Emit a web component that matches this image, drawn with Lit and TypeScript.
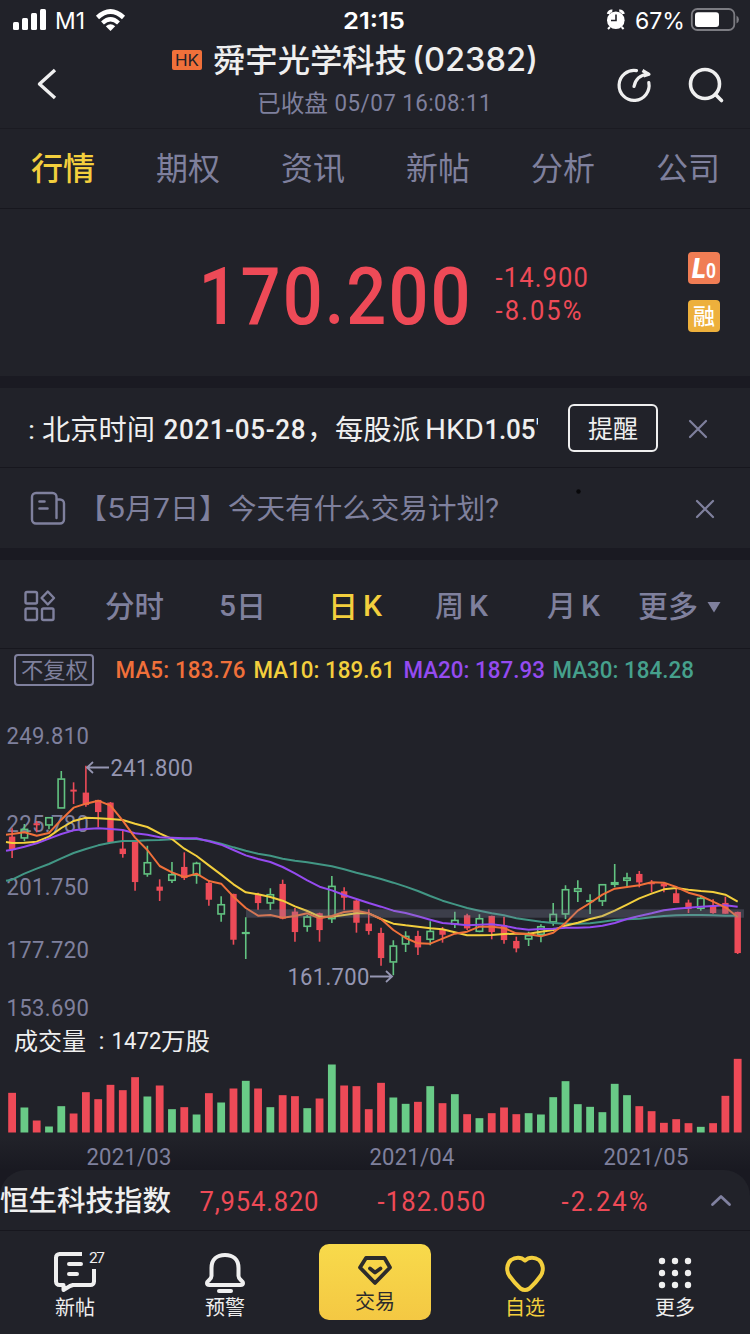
import { LitElement, html, svg, css } from "lit";
import { customElement } from "lit/decorators.js";

/** One line of text set to an exact advance width, with its baseline inside a box of height h. */
const line = (text: string, w: number, size: number, base: number, h: number, cls = "") => html`
  <svg class="line ${cls}" width=${w} height=${h}>
    <text x="0" y=${base} font-size=${size} textLength=${w} lengthAdjust="spacingAndGlyphs">${text}</text>
  </svg>`;

/** Figures: narrow glyphs, openly spaced over the width w. */
const figures = (text: string, w: number, size: number, base: number, h: number, cls = "", squeeze = 0.93) => html`
  <svg class="line ${cls}" width=${w} height=${h}>
    <text transform="translate(0.5 0) scale(${squeeze} 1)" x="0" y=${base} font-size=${size} textLength=${w / squeeze} lengthAdjust="spacing">${text}</text>
  </svg>`;

// [rising, high, bodyTop, bodyBottom, low, volume] in thirds of a pixel
const CANDLES: [number, number, number, number, number, number][] = [
  [0,385,411,447,474,119],[1,372,387,415,424,75],[0,363,371,374,397,36],[1,351,352,376,388,18],[1,213,236,325,325,79],
  [0,247,270,273,312,57],[0,197,279,314,320,121],[0,300,301,335,382,100],[0,306,309,426,426,143],[0,393,447,461,473,127],
  [0,424,425,545,572,166],[1,437,487,523,530,108],[0,538,561,571,603,141],[1,486,523,542,549,70],[0,457,502,533,540,76],
  [1,485,489,527,551,54],[0,542,550,598,617,118],[1,589,613,643,665,90],[0,581,583,718,734,132],[1,652,697,700,777,155],
  [0,578,584,608,629,132],[1,565,583,610,630,76],[0,539,553,655,658,112],[0,624,636,695,725,109],[1,645,650,680,695,73],
  [0,638,641,689,725,102],[1,528,558,657,669,204],[0,562,575,592,631,141],[0,600,603,667,698,139],[0,628,672,692,704,70],
  [0,683,700,773,797,149],[1,721,737,787,826,105],[1,694,708,733,756,86],[0,692,709,741,765,92],[1,664,693,719,736,139],
  [0,681,689,703,728,88],[1,635,660,673,684,115],[0,641,647,684,690,55],[1,643,655,695,697,43],[0,647,649,695,718,58],
  [0,650,677,719,731,75],[0,710,724,744,757,55],[1,695,706,718,738,58],[1,673,679,704,727,54],[1,609,642,667,677,106],
  [1,556,568,643,657,154],[1,541,565,575,606,85],[1,583,601,605,642,77],[1,553,553,604,618,61],[1,492,547,554,562,146],
  [1,518,533,542,563,112],[0,513,523,546,562,79],[0,540,548,549,577,64],[0,546,552,558,577,29],[0,567,581,608,608,40],
  [0,599,609,626,639,28],[1,590,594,626,632,17],[0,598,618,638,641,28],[0,590,610,640,641,110],[0,635,637,758,762,221],
];

const AVERAGES: [string, number[]][] = [
  ["teal", [542,539,521,506,492,475,459,447,436,428,423,423,421,420,418,417,417,422,431,442,452,461,467,476,482,487,493,499,508,518,527,537,548,560,573,588,602,613,624,632,640,646,655,660,665,669,671,671,670,665,660,658,656,652,648,646,645,645,646,647,647]],
  ["gold", [426,429,428,425,410,384,363,353,355,357,360,371,381,400,417,446,468,496,524,553,577,583,591,602,619,633,650,650,645,640,640,657,671,676,680,685,688,697,706,706,705,702,701,701,695,690,677,668,657,648,632,614,595,581,568,564,569,573,576,584,605]],
  ["purple", [452,449,440,430,416,402,391,387,385,387,390,400,404,412,413,415,415,424,434,450,466,477,486,501,520,541,560,571,585,597,609,620,632,639,649,659,669,672,676,674,673,677,685,689,687,686,683,683,682,677,669,657,648,640,631,626,623,620,618,616,620]],
  ["orange", [404,402,397,407,399,359,323,311,302,317,362,413,450,498,517,531,521,543,551,590,624,647,645,653,648,640,655,648,636,632,640,657,690,714,730,731,716,701,695,680,680,684,700,703,709,698,669,632,609,584,566,561,556,547,548,561,578,588,605,622,651]],
];

const cx = (i: number) => 12.1 + i * 12.298;
const cy = (v: number) => 700 + v / 3;
const SQUEEZE = 0.92;

@customElement("k-chart")
class KChart extends LitElement {
  static styles = css`
    :host { display: block; height: 480px; }
    svg { display: block; font-family: Roboto, "Noto Sans CJK SC", sans-serif; font-size: 24px; }
    text { fill: #7f809d; }
    .note { fill: #9596b2; }
    .title { fill: #efefef; }
    .up { stroke: #62c381; fill: none; stroke-width: 1.6; }
    .down { stroke: #ed4b58; fill: #ed4b58; stroke-width: 1.6; }
    .vup { fill: #69cb87; }
    .vdown { fill: #ee4a57; }
    .ma { fill: none; stroke-width: 2; stroke-linejoin: round; }
    .orange { stroke: #f0703a; }
    .gold { stroke: #f3cf3d; }
    .purple { stroke: #954bf0; }
    .teal { stroke: #429785; }
    .arrow { fill: none; stroke: #9596b2; stroke-width: 1.8; }
    .band { fill: #8587a0; opacity: 0.28; }
  `;

  label(text: string, x: number, y: number, w: number, cls = "") {
    return svg`<text class=${cls} x=${x} y=${y} textLength=${w} lengthAdjust="spacingAndGlyphs">${text}</text>`;
  }

  figure(text: string, x: number, y: number, w: number, cls = "") {
    return svg`<text class=${cls} transform="translate(${x + 0.4} ${y}) scale(${SQUEEZE} 1)" textLength=${w / SQUEEZE} lengthAdjust="spacing">${text}</text>`;
  }

  render() {
    return html`
      <svg width="750" height="480" viewBox="0 690 750 480">
        <defs>
          <linearGradient id="fade" x1="0" y1="0" x2="0" y2="1">
            <stop offset="0" stop-color="#191921" stop-opacity="0"></stop>
            <stop offset="1" stop-color="#191921"></stop>
          </linearGradient>
        </defs>
        <rect x="0" y="1138" width="750" height="32" fill="url(#fade)"></rect>
        ${this.figure("249.810", 6, 744, 82.500)}
        ${this.figure("225.780", 6, 832, 82.500)}
        ${this.figure("201.750", 6, 895, 82.500)}
        ${this.figure("177.720", 6, 958, 82.500)}
        ${this.figure("153.690", 6, 1016, 82.500)}
        ${CANDLES.map(([up, high, top, bottom, low], i) => up
          ? svg`<g class="up">
              <path d="M${cx(i)} ${cy(high)}V${cy(top)}M${cx(i)} ${cy(bottom)}V${cy(low)}"></path>
              <rect x=${cx(i) - 3.2} y=${cy(top) + 0.4} width="6.4" height=${Math.max(0.6, (bottom - top) / 3 - 0.8)}></rect>
            </g>`
          : svg`<g class="down">
              <path d="M${cx(i)} ${cy(high)}V${cy(low)}"></path>
              <rect x=${cx(i) - 2.4} y=${cy(top) + 0.4} width="4.8" height=${Math.max(0.4, (bottom - top) / 3 - 0.8)}></rect>
            </g>`)}
        ${AVERAGES.map(([cls, ys]) => svg`
          <polyline class="ma ${cls}" points=${ys.map((v, i) => `${i ? cx(i - 1) : 6},${cy(v)}`).join(" ")}></polyline>`)}
        <rect class="band" x="246" y="909.3" width="498" height="8.4"></rect>
        <path class="arrow" d="M109 767.5H87M93 762l-6 5.500 6 5.500"></path>
        ${this.figure("241.800", 110, 776, 82.500, "note")}
        <path class="arrow" d="M370 976.500H392M386 971l6 5.500-6 5.500"></path>
        ${this.figure("161.700", 287, 985, 82, "note")}
        ${this.label("成交量", 14, 1050, 72, "title")}
        ${this.label(":", 98.500, 1049, 6, "title")}
        ${this.figure("1472", 111, 1049, 50, "title")}
        ${this.label("万股", 161, 1050, 49, "title")}
        ${CANDLES.map(([up, , , , , vol], i) => svg`
          <rect class=${up ? "vup" : "vdown"} x=${cx(i) - 3.9} y=${1132.500 - vol / 3} width="7.8" height=${vol / 3}></rect>`)}
        ${this.figure("2021/03", 86, 1164.500, 85)}
        ${this.figure("2021/04", 369, 1164.500, 85)}
        ${this.figure("2021/05", 603, 1164.500, 85)}
      </svg>`;
  }
}

@customElement("app-root")
class AppRoot extends LitElement {
  static styles = css`
    :host {
      display: block; width: 750px; height: 1334px; overflow: hidden; background: #212229;
      color: #efefef; font-family: Roboto, "Noto Sans CJK SC", sans-serif;
    }
    * { box-sizing: border-box; }
    svg { display: block; flex: none; overflow: visible; }
    .line text { fill: currentColor; }
    .row { display: flex; }
    .inter { font-family: Inter, sans-serif; }
    .medium { font-weight: 500; }
    .bold { font-weight: 600; }
    .muted { color: #7f809d; }
    .gold { color: #f3cf3d; }
    .red { color: #ee4a57; }
    .orange { color: #f0703a; }
    .purple { color: #954bf0; }
    .teal { color: #46a08c; }

    .status { height: 40px; padding-left: 12px; color: #fff; }
    .status .carrier { margin-left: 7px; }
    .status .wifi { margin-left: 10px; }
    .status .clock { margin-left: 216px; }
    .status .alarm { margin-left: 201px; }
    .status .percent { margin-left: 9px; }
    .status .battery { margin-left: 5px; }

    .header { height: 89px; border-bottom: 1px solid #1b1b22; display: grid; grid-template-columns: 172px 366px 1fr; }
    .back { margin-left: 36px; margin-top: 27px; }
    .title { height: 42px; }
    .hk { width: 30px; height: 20px; margin: 10px 11px 0 0; background: #f0703a; border-radius: 2px; color: #212229; padding-left: 3px; }
    .sub { padding-left: 85px; gap: 6px; }
    .code { margin-left: 5px; }
    .actions { padding: 27px 0 0 78px; gap: 34px; }

    .tabs { height: 80px; border-bottom: 1px solid #17171e; display: grid; grid-template-columns: repeat(6, 1fr); justify-items: center; }
    .quote { height: 167px; padding-left: 198px; }
    .change { margin-left: 25px; width: 193px; }
    .badges { display: grid; gap: 16px; align-content: start; padding-top: 43px; }
    .badge { width: 32px; height: 32px; border-radius: 4px; color: #fff; }
    .lo { background: #f07d54; padding-left: 4px; }
    .margin { background: #edb03c; padding-left: 5px; }
    .lo svg { font-style: italic; font-weight: 900; }
    .lo .zero { font-style: normal; font-weight: 700; }
    .gap { height: 12px; background: #1a1a22; }

    .notice { height: 80px; border-bottom: 1px solid #17171e; padding-left: 28px; }
    .marquee { width: 510px; overflow: hidden; }
    .m1 { margin-left: 7px; } .m2 { margin-left: 8px; } .m3 { margin-left: 2px; } .m4 { margin-left: 5px; }
    .remind { width: 90px; height: 48px; margin: 16px 0 0 30px; border: 2px solid #efefef; border-radius: 6px; padding-left: 18px; }
    .close { margin: 32px 0 0 31px; }
    .plan { height: 80px; padding-left: 30px; }
    .plan .news { margin: 23px 12px 0 0; }
    .plan .dot { margin: 21px 0 0 77px; }
    .plan .close { margin-left: 115px; }

    .periods { height: 89px; border-bottom: 1px solid #17171e; padding-left: 23px; }
    .periods .grid { margin-top: 29px; }
    .p1 { margin-left: 49px; } .p2 { margin-left: 55px; } .p3 { margin-left: 62px; }
    .p4 { margin-left: 53px; } .p5 { margin-left: 59px; } .p6 { margin-left: 38px; }
    .pk { margin-left: 5px; }
    .tri { margin: 42px 0 0 9px; }

    .ma { height: 41px; padding-left: 14px; gap: 8px; }
    .adjust { width: 80px; height: 32px; margin: 5px 13px 0 0; border: 2px solid #7f809d; border-radius: 4px; padding-left: 5px; }

    .under { background: #191921; }
    .index { height: 61px; background: #212229; border-bottom: 1px solid #17171e; border-radius: 26px 26px 0 0; }
    .i1 { margin-left: 28px; } .i2 { margin-left: 59px; } .i3 { margin-left: 76px; }
    .chev { margin: 24px 0 0 64px; }

    .nav { display: grid; grid-template-columns: repeat(5, 1fr); justify-items: center; height: 103px; }
    .item { padding-top: 13px; display: grid; justify-items: center; align-content: start; }
    .trade { background: linear-gradient(#f8da4b, #f4c843); width: 112px; height: 76px; border-radius: 10px; margin-top: 13px; padding-top: 0; color: #2c2b2c; }
  `;

  cross() {
    return html`<svg class="close" width="18" height="18" viewBox="0 0 18 18">
      <path d="M1 1L17 17M17 1L1 17" stroke="#7f809d" stroke-width="2.200" stroke-linecap="round"></path></svg>`;
  }

  statusBar() {
    return html`<div class="row status">
      <svg width="36" height="40" fill="#fff">
        <rect x="1" y="22" width="6" height="8" rx="1.500"></rect><rect x="10" y="18" width="6" height="12" rx="1.500"></rect>
        <rect x="19" y="13" width="6" height="17" rx="1.500"></rect><rect x="28" y="9" width="6" height="21" rx="1.500"></rect>
      </svg>
      <div class="carrier">${line("M1", 30, 23.500, 29, 40, "inter")}</div>
      <svg class="wifi" width="32" height="40" viewBox="95 0 32 40" fill="none" stroke="#fff">
        <path d="M97.500 17.500Q110.500 5.500 123.500 17.500" stroke-width="4.600"></path>
        <path d="M102.500 23Q110.500 15.500 118.500 23" stroke-width="4.200"></path>
        <path d="M110.500 31L105.800 26.300Q110.500 22.300 115.200 26.300Z" fill="#fff" stroke="none"></path>
      </svg>
      <div class="clock">${line("21:15", 62, 23.500, 29, 40, "inter bold")}</div>
      <svg class="alarm" width="20" height="40" viewBox="606 0 20 40">
        <circle cx="615.800" cy="20.300" r="8.800" fill="#fff"></circle>
        <path d="M608.300 14a3.500 3.500 0 0 1 4-3M623.300 14a3.500 3.500 0 0 0-4-3" stroke="#fff" stroke-width="3" fill="none"></path>
        <path d="M610 27l-2 2M621.600 27l2 2" stroke="#fff" stroke-width="2"></path>
        <path d="M616 14.500v6h-5" stroke="#212229" stroke-width="1.600" fill="none"></path>
      </svg>
      <div class="percent">${line("67%", 50, 23.500, 29, 40, "inter")}</div>
      <svg class="battery" width="50" height="40" viewBox="690 0 50 40">
        <rect x="691.800" y="9" width="42.500" height="21" rx="5.500" fill="none" stroke="#7c7c82" stroke-width="1.800"></rect>
        <rect x="695" y="12.300" width="24" height="14.600" rx="3" fill="#fff"></rect>
        <path d="M736.500 15.500a4.500 4.500 0 0 1 0 8z" fill="#7c7c82"></path>
      </svg>
    </div>`;
  }

  header() {
    return html`<div class="header">
      <svg class="back" width="30" height="34" viewBox="36 67 30 34"><path d="M55 70L39.500 84L55 98" fill="none" stroke="#efefef" stroke-width="3.400" stroke-linejoin="round"></path></svg>
      <div>
        <div class="row title">
          <div class="hk">${line("HK", 24, 16.500, 16, 20, "inter")}</div>
          ${line("舜宇光学科技", 194, 32, 32, 42, "medium")}
          <div class="code">${line("(02382)", 126, 32, 31, 42, "inter medium")}</div>
        </div>
        <div class="row sub muted">${line("已收盘", 71, 24, 29.500, 40)}${figures("05/07 16:08:11", 157, 24, 29, 40)}</div>
      </div>
      <div class="row actions">
        <svg width="36" height="36" viewBox="616 67 36 36" fill="none" stroke="#efefef" stroke-width="3.200">
          <path d="M636.500 70.600A15 15 0 1 0 648.800 82.500" stroke-linecap="round"></path>
          <path d="M634 86.500Q636 75.500 648 74" stroke-linecap="round"></path>
          <path d="M642.500 70.500L649 74.300L643.500 76" stroke-linejoin="round"></path>
        </svg>
        <svg width="38" height="36" viewBox="686 67 38 36" fill="none" stroke="#efefef" stroke-width="3.600">
          <circle cx="705" cy="84" r="14.500"></circle><path d="M715.500 94.500L721.500 100.500" stroke-linecap="round"></path>
        </svg>
      </div>
    </div>`;
  }

  render() {
    return html`
      ${this.statusBar()}
      ${this.header()}
      <div class="tabs">
        ${["行情", "期权", "资讯", "新帖", "分析", "公司"].map((t, i) => line(t, 64, 32, 51, 79, i ? "muted" : "gold medium"))}
      </div>

      <div class="row quote red">
        ${figures("170.200", 272, 80, 115, 167, "medium", 0.88)}
        <div class="change">
          ${figures("-14.900", 92.500, 27.500, 78, 84)}
          ${figures("-8.05%", 86, 27.500, 27, 40)}
        </div>
        <div class="badges">
          <div class="row badge lo">${line("L", 14, 28, 26, 32)}${line("0", 10, 21, 26, 32, "zero")}</div>
          <div class="row badge margin">${line("融", 22, 22, 24, 32, "medium")}</div>
        </div>
      </div>
      <div class="gap"></div>

      <div class="row notice">
        <div class="row marquee">
          ${line(":", 7, 26, 51, 79)}
          ${line("北京时间", 113, 28, 51.500, 79, "m1")}
          ${figures("2021-05-28", 142, 28, 51, 79, "medium m2")}
          ${line("，", 28, 28, 51, 79, "m3")}
          ${line("每股派", 85, 28, 51.500, 79)}
          ${line("HKD", 59, 28, 51, 79, "m4")}
          ${figures("1.05", 51, 28, 51, 79, "medium")}
          ${line("'", 6, 28, 51, 79)}
        </div>
        <div class="remind">${line("提醒", 50, 25, 31.500, 44)}</div>
        ${this.cross()}
      </div>

      <div class="row plan muted">
        <svg class="news" width="36" height="36" viewBox="30 491 36 36" fill="none" stroke="#7f809d" stroke-width="2.400">
          <path d="M56.500 518V497a4 4 0 0 0-4-4H36a4 4 0 0 0-4 4V519.500a4 4 0 0 0 4 4H60a4 4 0 0 0 4-4V503.500a4 4 0 0 0-4-4H57" stroke-linecap="round"></path>
          <path d="M39.500 501.500h5M39.500 508.500h8" stroke-width="2.600" stroke-linecap="round"></path>
        </svg>
        ${line("【", 29, 28, 51, 79)}${line("5", 18, 28, 50, 79)}${line("月", 28, 28, 51, 79)}${line("7", 17, 28, 50, 79)}${line("日", 29, 28, 51, 79)}${line("】", 29, 28, 51, 79)}
        ${line("今天有什么交易计划", 257, 28, 51, 79)}${line("?", 14, 28, 50, 79)}
        <svg class="dot" width="5" height="5"><circle cx="2.500" cy="2.500" r="2.200" fill="#08080a"></circle></svg>
        ${this.cross()}
      </div>
      <div class="gap"></div>

      <div class="row periods muted">
        <svg class="grid" width="33" height="34" viewBox="23 589 33 34" fill="none" stroke="#7f809d" stroke-width="2.400" stroke-linejoin="round">
          <rect x="25.500" y="592" width="11.500" height="11.500" rx="1.500"></rect><path d="M47.800 591.500L54 598L47.800 604.500L41.600 598Z"></path>
          <rect x="25.500" y="608.500" width="11.500" height="11.500" rx="1.500"></rect><rect x="42" y="608.500" width="11.500" height="11.500" rx="1.500"></rect>
        </svg>
        ${line("分时", 59, 29.500, 57, 88, "p1 medium")}
        ${line("5", 17, 29, 56, 88, "p2 medium")}${line("日", 30, 30, 57, 88, "medium")}
        ${line("日", 30, 30, 57, 88, "p3 gold medium")}${line("K", 19, 29, 56, 88, "pk gold medium")}
        ${line("周", 29, 29, 57, 88, "p4 medium")}${line("K", 19, 29, 56, 88, "pk medium")}
        ${line("月", 29, 29, 57, 88, "p5 medium")}${line("K", 19, 29, 56, 88, "pk medium")}
        ${line("更多", 60, 29.500, 57, 88, "p6 medium")}
        <svg class="tri" width="14" height="11"><path d="M0.500 0H13.500L7 10.500Z" fill="#7f809d"></path></svg>
      </div>

      <div class="row ma">
        <div class="adjust muted">${line("不复权", 67, 22, 22, 28)}</div>
        ${figures("MA5: 183.76", 130, 24, 29, 41, "orange medium")}
        ${figures("MA10: 189.61", 141.500, 24, 29, 41, "gold medium")}
        ${figures("MA20: 187.93", 141.500, 24, 29, 41, "purple medium")}
        ${figures("MA30: 184.28", 141.500, 24, 29, 41, "teal medium")}
      </div>
      <k-chart></k-chart>

      <div class="under">
        <div class="row index">
          ${line("恒生科技指数", 171, 28, 41, 60, "medium")}
          ${figures("7,954.820", 119, 27.500, 41, 60, "red i1")}
          ${figures("-182.050", 108, 27.500, 41, 60, "red i2")}
          ${figures("-2.24%", 86, 27.500, 41, 60, "red i3")}
          <svg class="chev" width="20" height="13"><path d="M1.500 10.500L10 2.500L18.500 10.500" fill="none" stroke="#8081a0" stroke-width="2.800" stroke-linecap="round" stroke-linejoin="round"></path></svg>
        </div>
      </div>

      <div class="nav">
        <div class="item">
          <svg width="60" height="50" viewBox="45 1244 60 50" fill="none" stroke="#efefef" stroke-width="4">
            <path d="M82 1254H59.500a3.500 3.500 0 0 0-3.500 3.500V1281.500a3.500 3.500 0 0 0 3.500 3.500H63.500V1290L70 1286L73 1285H90.500a3.500 3.500 0 0 0 3.500-3.500V1269" stroke-linejoin="round"></path>
            <path d="M69 1264H81M69 1274H77" stroke-linecap="round"></path>
            <text x="89" y="1263" font-size="15.500" textLength="16" fill="#efefef" stroke="none">27</text>
          </svg>
          ${line("新帖", 40, 20, 21, 30)}
        </div>
        <div class="item">
          <svg width="60" height="50" viewBox="195 1244 60 50" fill="none" stroke="#efefef" stroke-width="4">
            <path d="M211.500 1276V1268C211.500 1259.500 217 1255 225 1255S238.500 1259.500 238.500 1268V1276C238.500 1280 243 1280.500 243 1283Q243 1285 240.500 1285H209.500Q207 1285 207 1283C207 1280.500 211.500 1280 211.500 1276Z" stroke-linejoin="round"></path>
            <path d="M219 1291H231" stroke-linecap="round"></path>
          </svg>
          ${line("预警", 40, 20, 21, 30)}
        </div>
        <div class="item trade">
          <svg width="40" height="43" viewBox="355 1244 40 43" fill="none" stroke="#2c2b2c" stroke-width="3.800" stroke-linejoin="round" stroke-linecap="round">
            <path d="M366 1258H384.500L390 1267.500L375 1283L360 1267.500Z"></path><path d="M370 1268.500L375 1272.500L380.500 1268.500"></path>
          </svg>
          ${line("交易", 40, 20, 21.500, 30)}
        </div>
        <div class="item gold">
          <svg width="60" height="50" viewBox="495 1244 60 50" fill="none" stroke="#f3cf3d" stroke-width="4">
            <path d="M525 1260.500C529 1256.500 535 1257 539 1260C543.500 1264 544 1271 540.500 1276C537 1281 533.500 1285 529.500 1288.500Q525 1291.500 520.500 1288.500C516.500 1285 513 1281 509.500 1276C506 1271 506.500 1264 511 1260C515 1257 521 1256.500 525 1260.500Z" stroke-linejoin="round"></path>
          </svg>
          ${line("自选", 40, 20, 21, 30)}
        </div>
        <div class="item">
          <svg width="60" height="50" viewBox="645 1244 60 50" fill="#efefef">
            ${[662, 675, 688].map((x) => [1261, 1273, 1285].map((y) => svg`<circle cx=${x} cy=${y} r="3.200"></circle>`))}
          </svg>
          ${line("更多", 40, 20, 21, 30)}
        </div>
      </div>`;
  }
}
